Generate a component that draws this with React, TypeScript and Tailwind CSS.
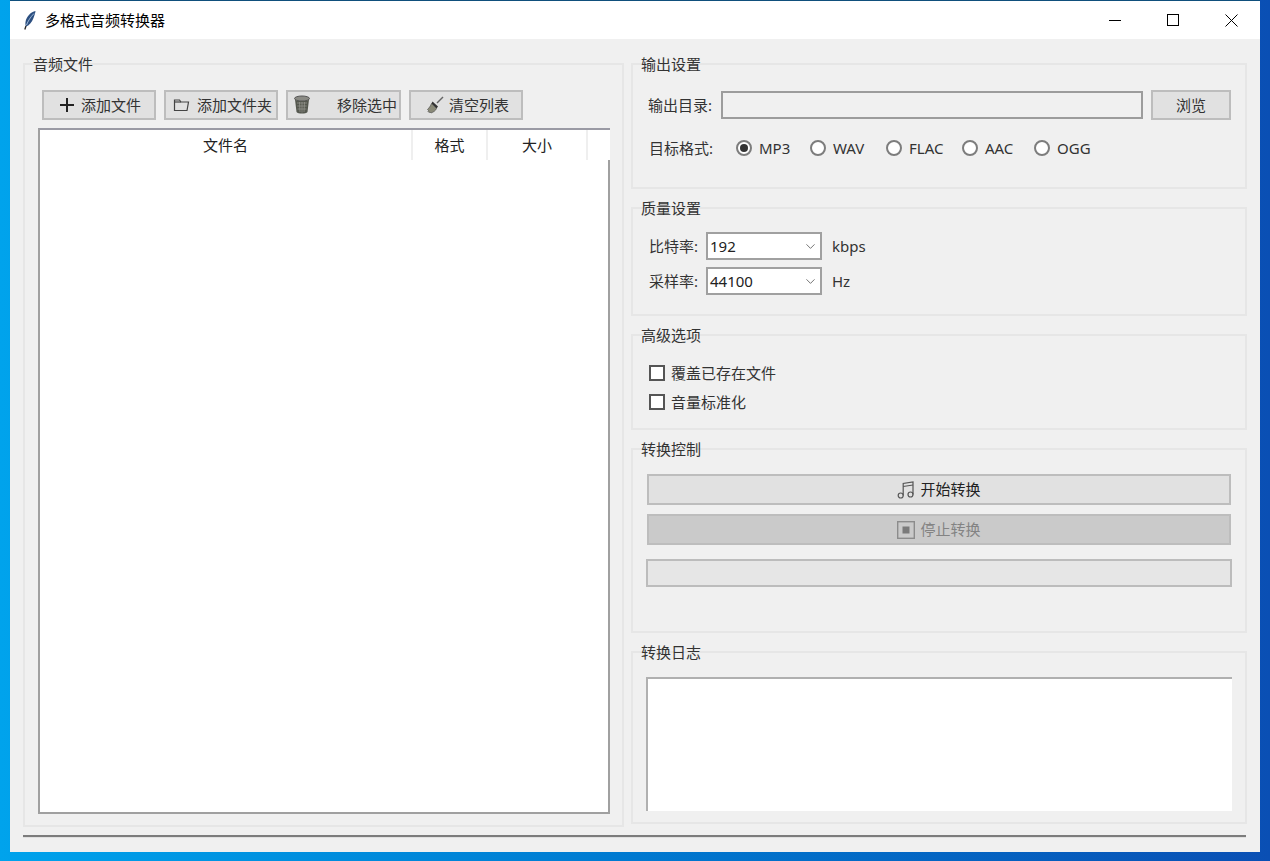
import type { ReactNode } from 'react';
import { ChevronDown } from 'lucide-react';

const font = { fontFamily: '"Noto Sans", "Noto Sans CJK SC", sans-serif' };

const Group = ({ title, className, children }: { title: string; className: string; children?: ReactNode }) => (
  <section className={`relative border-2 border-[#e6e6e6] ${className}`}>
    <span className="absolute left-[8px] top-[-11px] text-[15px] leading-[20px] text-[#333]">{title}</span>
    {children}
  </section>
);

const Btn = ({ className, children }: { className: string; children: ReactNode }) => (
  <button className={`flex h-[30px] items-center border-2 border-[#bdbdbd] bg-[#e1e1e1] text-[15px] text-[#333] ${className}`}>
    {children}
  </button>
);

const Radio = ({ label, checked, className }: { label: string; checked?: boolean; className: string }) => (
  <label className={`flex items-center ${className}`}>
    <span className="flex h-[16px] w-[16px] items-center justify-center rounded-full border-2 border-[#7d7d7d] bg-white">
      {checked && <span className="h-[8px] w-[8px] rounded-full bg-[#333]" />}
    </span>
    <span className="ml-[7px] text-[15px] text-[#333]">{label}</span>
  </label>
);

const Check = ({ label }: { label: string }) => (
  <label className="flex h-[16px] items-center">
    <span className="h-[16px] w-[16px] border-2 border-[#555] bg-white" />
    <span className="ml-[6px] text-[15px] text-[#333]">{label}</span>
  </label>
);

const Combo = ({ value, unit, label }: { value: string; unit: string; label: string }) => (
  <div className="flex h-[28px] items-center">
    <span className="w-[58px] shrink-0 pl-[1px] text-[15px] text-[#333]">{label}</span>
    <div className="flex h-[28px] w-[116px] items-center justify-between border-2 border-[#a0a0a0] bg-white pl-[2px] pr-[2px] text-[15px] text-[#222]">
      <span>{value}</span>
      <ChevronDown size={15} strokeWidth={1.3} className="text-[#555]" />
    </div>
    <span className="ml-[10px] text-[15px] text-[#333]">{unit}</span>
  </div>
);

const Feather = () => (
  <svg width="14" height="20" viewBox="0 0 14 20">
    <path d="M12.5 1C8 2 3.5 6 2.5 12c-.3 2 0 3.500.5 4.500 3-1 6-4 7.500-8.500 1-3 1.800-5 2-7z" fill="#2c4f80" />
    <path d="M11 3.500C7.500 7 5 11 3.500 15" stroke="#9db8d8" strokeWidth="1" fill="none" />
    <path d="M3 16 1.800 19.500" stroke="#222" strokeWidth="1.300" fill="none" />
  </svg>
);

const FolderIcon = () => (
  <svg width="18" height="16" viewBox="0 0 18 16" fill="none" stroke="#444" strokeWidth="1.200">
    <path d="M1.500 13.500V3h5l1.500 2h7.500l-1.500 8.500z" />
    <path d="M1.500 5h6.500" />
  </svg>
);

const BinIcon = () => (
  <svg width="18" height="20" viewBox="0 0 18 20">
    <ellipse cx="9" cy="3.500" rx="7.500" ry="2.500" fill="#8b8b85" stroke="#555" />
    <path d="M2 4.500 3.500 17c1.500 2 9.500 2 11 0L16 4.500c-3 2-11 2-14 0z" fill="#55584f" />
    <path d="M4 8h10M4.300 11h9.400M4.600 14h8.800M6.500 7l.5 10M9 7v10.500M11.500 7 11 17" stroke="#9a9a92" strokeWidth=".7" />
  </svg>
);

const BroomIcon = () => (
  <svg width="20" height="20" viewBox="0 0 20 20">
    <path d="M11.500 7.500 17.500 1.500l1 1-6 6z" fill="#666" />
    <path d="M7.500 6.500 13 11.500l-1.500 2-5-5z" fill="#333" />
    <path d="M6.500 8.500l5 5c-1 2.500-3 3.500-5.500 4.500l-1-1-1 .5-1-1 .5-1-1-1C4 13 5.500 11 6.500 8.500z" fill="#8a8a78" stroke="#444" strokeWidth=".6" />
  </svg>
);

const NotesIcon = () => (
  <svg width="18" height="18" viewBox="0 0 18 18" fill="none" stroke="#555" strokeWidth="1.200">
    <circle cx="3.700" cy="14.500" r="2.500" />
    <circle cx="13.500" cy="13.500" r="2.500" />
    <path d="M6.200 14.500V2.500L16 1v12.500" />
    <path d="M6.200 5.500 16 4" />
  </svg>
);

const StopIcon = () => (
  <svg width="18" height="18" viewBox="0 0 18 18" fill="none">
    <rect x=".7" y=".7" width="16.600" height="16.600" stroke="#8c8c8c" strokeWidth="1.400" />
    <rect x="5.500" y="5.500" width="7" height="7" fill="#7a7a7a" />
  </svg>
);

const App = () => (
  <div className="h-[861px] w-[1270px] overflow-hidden bg-gradient-to-r from-[#00a3ec] to-[#0a4fb4] pl-[10px]" style={font}>
    <div className="flex h-[852px] w-[1250px] flex-col border-t border-[#0f4f7c] bg-[#f0f0f0]">
      {/* title bar */}
      <div className="flex h-[38px] shrink-0 items-center bg-white">
        <div className="ml-[13px] flex w-[22px]"><Feather /></div>
        <span className="text-[15px] text-black">多格式音频转换器</span>
        <div className="ml-auto flex h-full items-center">
          <span className="flex w-[58px] justify-center"><span className="h-px w-[12px] bg-black" /></span>
          <span className="flex w-[58px] justify-center"><span className="h-[12px] w-[12px] border border-black" /></span>
          <span className="flex w-[58px] justify-center">
            <svg width="13" height="13" viewBox="0 0 13 13" stroke="#000" strokeWidth="1"><path d="M.5.5l12 12M12.500.5l-12 12" /></svg>
          </span>
        </div>
      </div>

      <div className="flex gap-[7px] pl-[13px] pt-[24px]">
        {/* left: file list */}
        <Group title="音频文件" className="h-[764px] w-[601px] shrink-0 pl-[13px] pt-[25px]">
          <div className="flex gap-[8px] pl-[4px]">
            <Btn className="w-[114px] pl-[15px]">
              <svg width="16" height="16" viewBox="0 0 16 16" stroke="#222" strokeWidth="2"><path d="M8 1v14M1 8h14" /></svg>
              <span className="ml-[6px]">添加文件</span>
            </Btn>
            <Btn className="w-[114px] pl-[7px]">
              <FolderIcon />
              <span className="ml-[6px] whitespace-nowrap">添加文件夹</span>
            </Btn>
            <Btn className="w-[115px] pl-[5px]">
              <BinIcon />
              <span className="ml-[26px] whitespace-nowrap">移除选中</span>
            </Btn>
            <Btn className="w-[114px] pl-[14px]">
              <BroomIcon />
              <span className="ml-[4px] whitespace-nowrap">清空列表</span>
            </Btn>
          </div>
          <div className="mt-[8px] h-[686px] w-[572px] border-b-2 border-l-2 border-t-2 border-b-[#a0a0a0] border-l-[#a0a0a0] border-t-[#9a9aa4] bg-white">
            <div className="flex h-[30px] items-center text-[15px] text-[#222]">
              <span className="w-[373px] border-r-2 border-[#efefef] text-center leading-[30px]">文件名</span>
              <span className="w-[75px] border-r-2 border-[#efefef] text-center leading-[30px]">格式</span>
              <span className="w-[100px] border-r-2 border-[#efefef] text-center leading-[30px]">大小</span>
            </div>
            <div className="ml-auto h-[654px] w-[2px] translate-x-[0px] bg-[#a0a0a0]" />
          </div>
        </Group>

        {/* right: settings */}
        <div className="flex w-[616px] shrink-0 flex-col gap-[18px]">
          <Group title="输出设置" className="h-[126px]">
            <div className="flex items-center pl-[15px] pt-[25px]">
              <span className="w-[73px] shrink-0 text-[15px] text-[#333]">输出目录:</span>
              <div className="h-[28px] w-[422px] border-2 border-[#9c9c9c] bg-[#f0f0f0]" />
              <Btn className="ml-[8px] w-[80px] justify-center">浏览</Btn>
            </div>
            <div className="mt-[16px] flex h-[24px] items-center pl-[16px]">
              <span className="w-[87px] shrink-0 text-[15px] text-[#333]">目标格式:</span>
              <Radio label="MP3" checked className="w-[74px]" />
              <Radio label="WAV" className="w-[76px]" />
              <Radio label="FLAC" className="w-[76px]" />
              <Radio label="AAC" className="w-[72px]" />
              <Radio label="OGG" className="w-[70px]" />
            </div>
          </Group>

          <Group title="质量设置" className="h-[109px] pl-[15px] pt-[23px]">
            <div className="flex flex-col gap-[7px]">
              <Combo label="比特率:" value="192" unit="kbps" />
              <Combo label="采样率:" value="44100" unit="Hz" />
            </div>
          </Group>

          <Group title="高级选项" className="h-[96px] pl-[16px] pt-[29px]">
            <div className="flex flex-col gap-[13px]">
              <Check label="覆盖已存在文件" />
              <Check label="音量标准化" />
            </div>
          </Group>

          <Group title="转换控制" className="h-[185px] pl-[14px] pt-[24px]">
            <button className="flex h-[31px] w-[584px] items-center justify-center border-2 border-[#bdbdbd] bg-[#e1e1e1] text-[15px] text-[#222]">
              <NotesIcon />
              <span className="ml-[5px]">开始转换</span>
            </button>
            <button className="mt-[9px] flex h-[31px] w-[584px] items-center justify-center border-2 border-[#bdbdbd] bg-[#cacaca] text-[15px] text-[#838383]">
              <StopIcon />
              <span className="ml-[5px]">停止转换</span>
            </button>
            <div className="ml-[-1px] mt-[14px] h-[28px] w-[586px] border-2 border-[#bcbcbc] bg-[#e6e6e6]" />
          </Group>

          <Group title="转换日志" className="h-[173px] pl-[13px] pt-[24px]">
            <div className="h-[134px] w-[586px] border-l-2 border-t-2 border-[#b0b0b0] bg-white" />
          </Group>
        </div>
      </div>

      {/* status separator */}
      <div className="ml-[13px] mt-[8px] h-[3px] w-[1223px] border-t-2 border-[#7c7c7c] border-b border-b-[#e0e0e0]" />
    </div>
  </div>
);

export default App;
